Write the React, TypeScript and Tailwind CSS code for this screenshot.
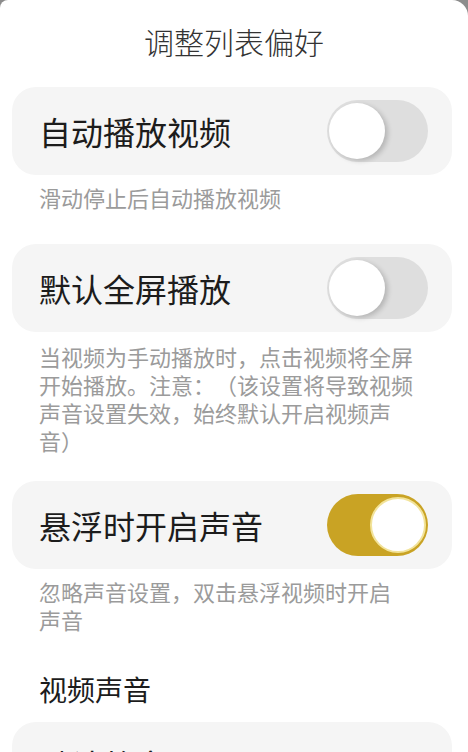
import React, { useState } from 'react';

const FONT = { fontFamily: '"Noto Sans CJK SC", "Noto Sans", sans-serif' };

const Toggle: React.FC<{ on: boolean; onChange: () => void }> = ({ on, onChange }) => (
  <button
    onClick={onChange}
    className={`flex h-[62px] w-[101px] shrink-0 items-center rounded-full px-[2px] ${
      on ? 'justify-end bg-[#c9a324]' : 'justify-start bg-[#dedede]'
    }`}
  >
    <span
      className={`block h-[56px] w-[56px] rounded-full bg-white ${
        on ? 'border-2 border-[#f2e39a]' : 'shadow-[3px_2px_5px_rgba(0,0,0,0.18)]'
      }`}
    />
  </button>
);

const SettingCard: React.FC<{ label: string; on: boolean; onChange: () => void }> = ({ label, on, onChange }) => (
  <div className="ml-[12px] mr-[16px] flex h-[88px] items-center justify-between rounded-[24px] bg-[#f5f5f5] pl-[27px] pr-[24px]">
    <span className="text-[32px] leading-none text-[#1c1c1c]">{label}</span>
    <Toggle on={on} onChange={onChange} />
  </div>
);

const Desc: React.FC<{ children: React.ReactNode; className?: string }> = ({ children, className = '' }) => (
  <p
    className={`box-content w-[390px] px-[39px] pt-[8px] text-[22px] leading-[28px] text-[#9b9b9b] [text-spacing-trim:space-all] ${className}`}
  >
    {children}
  </p>
);

const App: React.FC = () => {
  const [autoPlay, setAutoPlay] = useState(false);
  const [fullScreen, setFullScreen] = useState(false);
  const [floatSound, setFloatSound] = useState(true);

  return (
    <div className="h-[752px] w-[468px] overflow-hidden bg-[#8c8c8c]" style={FONT}>
      <div className="h-full rounded-tl-[8px] rounded-tr-[16px] bg-white">
        <h1 className="pt-[22px] text-center text-[30px] leading-[38px] font-light text-[#333]">调整列表偏好</h1>

        <div className="mt-[27px]">
          <SettingCard label="自动播放视频" on={autoPlay} onChange={() => setAutoPlay(!autoPlay)} />
          <Desc>滑动停止后自动播放视频</Desc>
        </div>

        <div className="mt-[33px]">
          <SettingCard label="默认全屏播放" on={fullScreen} onChange={() => setFullScreen(!fullScreen)} />
          <Desc className="pt-[10px]">
            当视频为手动播放时，点击视频将全屏<br />
            开始播放。注意：（该设置将导致视频<br />
            声音设置失效，始终默认开启视频声<br />
            音）
          </Desc>
        </div>

        <div className="mt-[27px]">
          <SettingCard label="悬浮时开启声音" on={floatSound} onChange={() => setFloatSound(!floatSound)} />
          <Desc className="pt-[7px] leading-[27px]">
            忽略声音设置，双击悬浮视频时开启<br />
            声音
          </Desc>
        </div>

        <h2 className="mt-[36px] px-[39px] text-[28px] leading-[40px] text-[#1c1c1c]">视频声音</h2>

        <div className="ml-[12px] mr-[16px] mt-[13px] h-[88px] rounded-[24px] bg-[#f5f5f5] pl-[27px] pt-[26px]">
          <span className="text-[32px] leading-none text-[#1c1c1c]">默认静音</span>
        </div>
      </div>
    </div>
  );
};

export default App;
